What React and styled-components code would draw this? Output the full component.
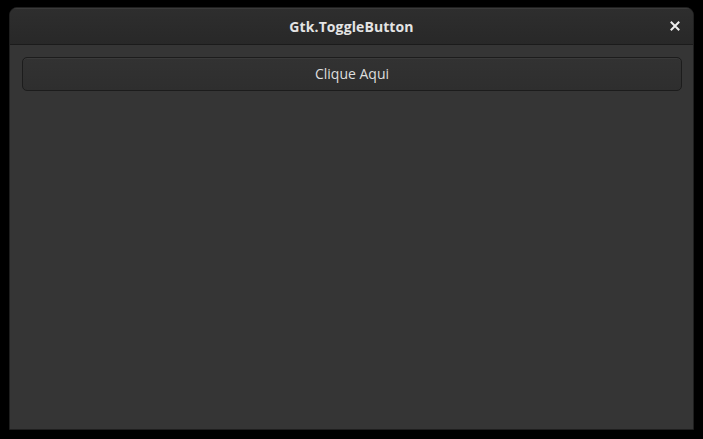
import React from "react";
import styled, { createGlobalStyle } from "styled-components";

const GlobalStyle = createGlobalStyle`
  html, body {
    margin: 0;
    padding: 0;
    background: #000;
    height: 100%;
    overflow: hidden;
  }
`;

const Screen = styled.div`
  width: 703px;
  height: 439px;
  padding: 7px 0 0 9px;
  box-sizing: border-box;
`;

const Window = styled.div`
  width: 685px;
  height: 423px;
  box-sizing: border-box;
  display: flex;
  flex-direction: column;
  background: #353535;
  border: 1px solid #1f1f1f;
  border-radius: 8px 8px 0 0;
  overflow: hidden;
  font-family: "Open Sans", "Noto Sans", sans-serif;
`;

const HeaderBar = styled.div`
  height: 36px;
  flex: none;
  display: flex;
  align-items: center;
  justify-content: center;
  position: relative;
  background: linear-gradient(#2e2e2e, #282828);
  border-bottom: 1px solid #1b1b1b;
  box-shadow: inset 0 1px 0 #3a3a3a;
`;

const Title = styled.h1`
  margin: 0;
  font-size: 14px;
  font-weight: 700;
  color: #e4e4e4;
  letter-spacing: 0.1px;
`;

const CloseButton = styled.button`
  position: absolute;
  right: 10px;
  top: 10px;
  width: 16px;
  height: 16px;
  padding: 0;
  border: none;
  background: none;
  display: flex;
  align-items: center;
  justify-content: center;
`;

const Content = styled.div`
  flex: 1;
  padding: 12px 11px 12px 12px;
  display: flex;
  flex-direction: column;
`;

const ToggleButton = styled.button`
  height: 34px;
  width: 100%;
  box-sizing: border-box;
  border: 1px solid #1c1c1c;
  border-radius: 5px;
  background: linear-gradient(#323232, #2e2e2e);
  box-shadow: inset 0 1px 0 #3a3a3a;
  color: #dedede;
  font-family: inherit;
  font-size: 14px;
  padding-bottom: 3px;
  outline: none;
`;

const App = () => {
  return (
    <>
      <GlobalStyle />
      <Screen>
        <Window>
          <HeaderBar>
            <Title>Gtk.ToggleButton</Title>
            <CloseButton>
              <svg width="10" height="10" viewBox="0 0 10 10">
                <path
                  d="M1.5 1.5 L8.5 8.5 M8.5 1.5 L1.5 8.5"
                  stroke="#eeeeee"
                  strokeWidth="2"
                  strokeLinecap="square"
                />
              </svg>
            </CloseButton>
          </HeaderBar>
          <Content>
            <ToggleButton>Clique Aqui</ToggleButton>
          </Content>
        </Window>
      </Screen>
    </>
  );
};

export default App;
